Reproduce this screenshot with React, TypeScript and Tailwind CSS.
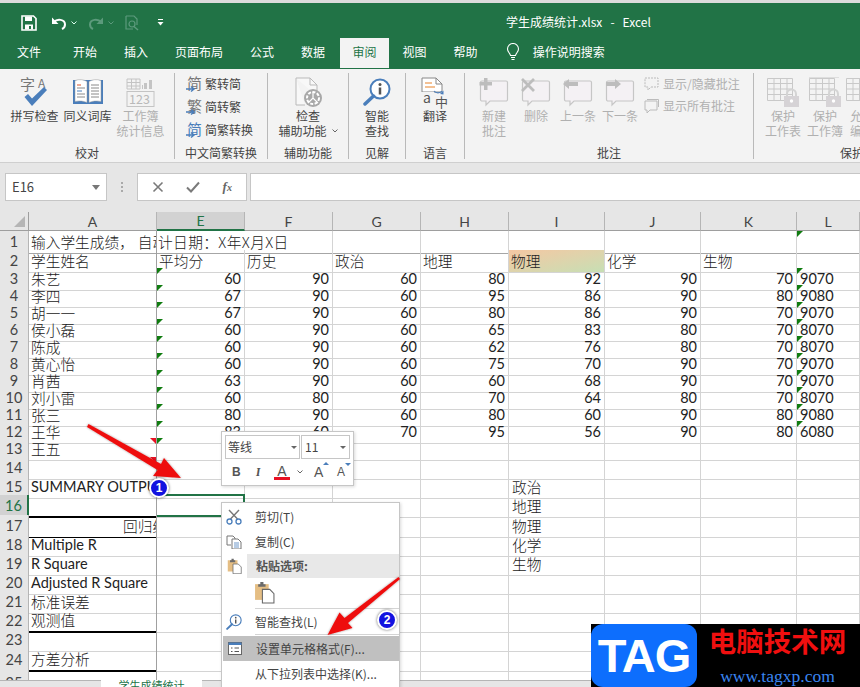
import React from "react";

const BLUE = "#4a7ebb";
const DIM = "#c4c4c4";

function Qat() {
  return (
    <div className="flex items-center h-[35px] pt-[4px]">
      <svg width="16" height="16" viewBox="0 0 16 16" className="ml-[21px]">
        <path d="M1 1h11.500L15 3.500V15H1z" fill="none" stroke="#fff" strokeWidth="1.600" />
        <rect x="4" y="1.500" width="7" height="4.500" fill="#fff" />
        <rect x="4" y="9.500" width="8" height="5" fill="#fff" />
        <rect x="8" y="11" width="2" height="3" fill="#217346" />
      </svg>
      <svg width="16" height="14" viewBox="0 0 16 14" className="ml-[14px]">
        <path d="M3 6c3-3.500 11-3 11 2.500 0 2-1 3.500-3 4.500" fill="none" stroke="#fff" strokeWidth="2" />
        <path d="M1 1.500v6.500h6.500z" fill="#fff" />
      </svg>
      <svg width="6" height="4" viewBox="0 0 6 4" className="ml-[4px]"><path d="M.5.500L3 3 5.500.500" fill="none" stroke="#dfe" strokeWidth="1" /></svg>
      <svg width="16" height="14" viewBox="0 0 16 14" className="ml-[11px]">
        <path d="M13 6C10 2.500 2 3 2 8.500c0 2 1 3.500 3 4.500" fill="none" stroke="#5c9a7c" strokeWidth="2" />
        <path d="M15 1.500v6.500H8.500z" fill="#5c9a7c" />
      </svg>
      <svg width="6" height="4" viewBox="0 0 6 4" className="ml-[4px]"><path d="M.5.500L3 3 5.500.500" fill="none" stroke="#5c9a7c" strokeWidth="1" /></svg>
      <svg width="15" height="16" viewBox="0 0 15 16" className="ml-[11px]">
        <path d="M1 1h8l3 3v6M1 1v13h7" fill="none" stroke="#5c9a7c" strokeWidth="1.200" />
        <circle cx="7" cy="9" r="3" fill="none" stroke="#5c9a7c" strokeWidth="1.200" />
        <path d="M9 11.500l4 3.500" stroke="#5c9a7c" strokeWidth="1.500" />
      </svg>
      <svg width="7" height="7" viewBox="0 0 7 7" className="ml-[17px]">
        <path d="M1 .500h5" stroke="#fff" strokeWidth="1" />
        <path d="M.500 3h6L3.500 6.500z" fill="#fff" />
      </svg>
    </div>
  );
}

function Tabs() {
  const tabs = ["开始", "插入", "页面布局", "公式", "数据"];
  return (
    <div className="flex h-[30px] text-[12px] text-white items-stretch">
      <div className="pl-[17px] pr-[18.5px] flex items-center pb-[3px]">文件</div>
      {tabs.map((t) => (
        <div key={t} className="px-[13.5px] flex items-center pb-[3px]">{t}</div>
      ))}
      <div className="ml-[1.5px] w-[49px] bg-[#f3f3f3] text-[#217346] flex items-center justify-center pb-[3px]">审阅</div>
      <div className="px-[13.5px] flex items-center pb-[3px]">视图</div>
      <div className="px-[13.5px] flex items-center pb-[3px]">帮助</div>
      <div className="ml-[15px] flex items-center pb-[3px]">
        <svg width="14" height="18" viewBox="0 0 14 18">
          <path d="M4.500 12.500C4 10 1.500 9 1.500 6a5.500 5.500 0 0 1 11 0c0 3-2.500 4-3 6.500z" fill="none" stroke="#fff" strokeWidth="1.100" />
          <path d="M5 14.500h4M5.500 16.500h3" stroke="#fff" strokeWidth="1.100" />
        </svg>
      </div>
      <div className="ml-[12.5px] flex items-center pb-[3px]">操作说明搜索</div>
    </div>
  );
}

function Big({ icon, lines, dim, w = 53, caret }: { icon: React.ReactNode; lines: string[]; dim?: boolean; w?: number; caret?: boolean }) {
  return (
    <div className={`flex flex-col items-center shrink-0 ${dim ? "text-[#b0b0b0]" : "text-[#444]"}`} style={{ width: w }}>
      <div className="h-[32px] flex items-center justify-center">{icon}</div>
      {lines.map((l, i) => (
        <div key={l} className="leading-[15px] whitespace-nowrap flex items-center">
          {l}
          {caret && i === 1 && (
            <svg width="6" height="4" viewBox="0 0 6 4" className="ml-[5px]"><path d="M.5.500L3 3 5.500.500" fill="none" stroke="#666" strokeWidth="1" /></svg>
          )}
        </div>
      ))}
    </div>
  );
}

const Spell = (
  <svg width="30" height="32" viewBox="0 0 30 32" className="overflow-visible">
    <text x="0" y="14" fontSize="15" fill="#777">字</text>
    <text x="18" y="12" fontSize="12" fill="#777">A</text>
    <path d="M8 18l4 4.500L24 11l3 3-15 16L4.500 21z" fill={BLUE} />
  </svg>
);
const Book = (
  <svg width="32" height="28" viewBox="0 0 32 28">
    <path d="M1 2h30v24H1z" fill={BLUE} />
    <path d="M3 2.500c4-1.500 9-1 12 1v21c-3-1.500-8-2-12-1zM29 2.500c-4-1.500-9-1-12 1v21c3-1.500 8-2 12-1z" fill="#fff" stroke="#999" strokeWidth=".5" />
    <path d="M5 7h4" stroke="#d9552c" strokeWidth="1" />
    <path d="M5 10h8M5 16h8M5 19h8" stroke="#8a8a8a" strokeWidth="1" />
    <path d="M5 13h5" stroke={BLUE} strokeWidth="1" />
    <path d="M19 7h8M19 10h8M19 13h8M19 16h8M19 19h8" stroke="#8a8a8a" strokeWidth="1" />
  </svg>
);
const Stats = (
  <svg width="29" height="29" viewBox="0 0 29 29" className="overflow-visible">
    <path d="M1 1h13v10H1zM1 4.500h13M1 8h13M5.500 1v10M10 1v10" fill="none" stroke={DIM} strokeWidth="1" />
    <path d="M18 5h3v6h-3zM23 2h3v9h-3zM16 7h1v4h-1z" fill={DIM} />
    <rect x="1" y="13.500" width="27" height="15" fill="none" stroke={DIM} />
    <text x="3" y="26" fontSize="12.500" fill="#b9b9b9">123</text>
  </svg>
);
const Doc = (
  <svg width="29" height="31" viewBox="0 0 29 31">
    <path d="M2 1h14l7 7v11M2 1v27h9" fill="#f8f8f8" stroke="#b9b9b9" />
    <path d="M16 1v7h7" fill="none" stroke="#b9b9b9" />
    <circle cx="19" cy="21" r="9" fill="#a8a8a8" />
    <circle cx="19" cy="21" r="6" fill="none" stroke="#fff" strokeWidth="2" strokeDasharray="3 1.500" />
    <path d="M19 15v6M14 26l5-5 5 5" stroke="#fff" strokeWidth="1.200" fill="none" />
  </svg>
);
const Lookup = ({ s = 28 }: { s?: number }) => (
  <svg width={s} height={s} viewBox="0 0 28 28">
    <circle cx="17" cy="11" r="9.500" fill="#fff" stroke={BLUE} strokeWidth="2" />
    <path d="M10.500 18L2 26" stroke={BLUE} strokeWidth="3.500" strokeLinecap="round" />
    <circle cx="17" cy="6.500" r="1.500" fill="#555" />
    <path d="M17 9.500v7" stroke="#555" strokeWidth="2.500" />
  </svg>
);
const Translate = (
  <svg width="30" height="32" viewBox="0 0 30 32" className="overflow-visible ml-[2px]">
    <path d="M1 2h14l6 6v8H1z" fill="#fff" stroke="#888" />
    <path d="M15 2v6h6" fill="none" stroke="#888" />
    <path d="M4 7h7M4 11h10" stroke="#e8832a" strokeWidth="1" />
    <rect x="1" y="16" width="12" height="13" fill="#f3f3f3" />
    <text x="2" y="27" fontSize="14" fill="#555">a</text>
    <text x="14" y="31" fontSize="13" fill="#555">中</text>
    <path d="M13 15c2 2.500 6 2.500 8 0" fill="none" stroke={BLUE} strokeWidth="1.200" />
    <path d="M19 18l3.500.5 0-4z" fill={BLUE} />
  </svg>
);

function Bubble({ kind }: { kind: "new" | "del" | "prev" | "next" }) {
  return (
    <svg width="32" height="29" viewBox="0 0 32 29">
      <path d="M5 5h24a1.500 1.500 0 0 1 1.500 1.500v17a1.500 1.500 0 0 1-1.500 1.500H13l-4 4v-4H5a1.500 1.500 0 0 1-1.500-1.500v-17A1.500 1.500 0 0 1 5 5z" transform="translate(-1 -2)" fill="#f4f1f4" stroke="#c6c6c6" strokeWidth="1.200" />
      {kind === "new" && <path d="M6 0h3.500v4H14v3.500H9.500V12H6V7.500H1.500V4H6z" fill="#bdbdbd" />}
      {kind === "del" && <path d="M2 1l12 12M14 1L2 13" stroke="#bdbdbd" strokeWidth="2.800" />}
      {kind === "prev" && <path d="M1 6l6-5v3h9v4H7v3z" fill="#bdbdbd" />}
      {kind === "next" && <path d="M17 6l-6-5v3H2v4h9v3z" fill="#bdbdbd" />}
    </svg>
  );
}

function Protect({ variant }: { variant: number }) {
  return (
    <svg width="35" height="31" viewBox="0 0 35 31" className="shrink-0">
      {variant === 2 && <path d="M1 0h30" stroke="#c9c9c9" />}
      <path d="M1.500 1.500h25v22h-25zM1.500 6.500h25M1.500 12h25M1.500 17.500h25M8 1.500v22M14.500 1.500v22M21 1.500v22" fill="none" stroke="#c9c9c9" />
      <path d="M21 20v-3a4.500 4.500 0 0 1 9 0v3" fill="none" stroke="#d4d4d4" strokeWidth="2" />
      <rect x="18" y="19" width="15" height="11" fill="#d6d3d6" />
      <circle cx="25.500" cy="24" r="1.700" fill="#fff" />
    </svg>
  );
}

function Small({ glyph, label, color }: { glyph: string; label: string; color: string }) {
  return (
    <div className="flex items-center h-[23px] text-[#444]">
      <svg width="17" height="20" viewBox="0 0 17 20" className="mr-[2px] overflow-visible">
        <text x="1" y="15" fontSize="15" fill={color}>{glyph}</text>
        <path d="M0 15h7M5 12.500l3 2.500-3 2.500" fill="none" stroke={BLUE} strokeWidth="1.500" />
      </svg>
      <span>{label}</span>
    </div>
  );
}

function Group({ w, label, children, last }: { w: number; label: string; children: React.ReactNode; last?: boolean }) {
  return (
    <div className={`flex flex-col shrink-0 my-[4px] h-[86px] ${last ? "" : "border-r border-[#b9b9b9]"}`} style={{ width: w }}>
      <div className="h-[73px] flex pt-[3px]">{children}</div>
      <div className={`h-[13px] text-[#444] leading-[14px] whitespace-nowrap ${last ? "pl-[86px] text-left" : "text-center"}`}>{label}</div>
    </div>
  );
}

function Ribbon() {
  return (
    <div className="flex h-[94px] bg-[#f3f3f3] text-[12px] border-b border-[#cfcfcf]">
      <Group w={175} label="校对">
        <div className="flex pl-[8px]">
          <Big icon={Spell} lines={["拼写检查"]} />
          <Big icon={Book} lines={["同义词库"]} />
          <Big icon={Stats} lines={["工作簿", "统计信息"]} dim />
        </div>
      </Group>
      <Group w={93} label="中文简繁转换">
        <div className="flex flex-col pl-[11px] -mt-[4px]">
          <Small glyph="简" label="繁转简" color="#777" />
          <Small glyph="繁" label="简转繁" color="#777" />
          <Small glyph="简" label="简繁转换" color={BLUE} />
        </div>
      </Group>
      <Group w={81} label="辅助功能">
        <Big icon={Doc} lines={["检查", "辅助功能"]} w={80} caret />
      </Group>
      <Group w={57} label="见解">
        <Big icon={<Lookup />} lines={["智能", "查找"]} w={56} />
      </Group>
      <Group w={59} label="语言">
        <Big icon={Translate} lines={["翻译"]} w={58} />
      </Group>
      <Group w={289} label="批注">
        <div className="flex pl-[8px]">
          <Big icon={<Bubble kind="new" />} lines={["新建", "批注"]} w={42} dim />
          <Big icon={<Bubble kind="del" />} lines={["删除"]} w={42} dim />
          <Big icon={<Bubble kind="prev" />} lines={["上一条"]} w={42} dim />
          <Big icon={<Bubble kind="next" />} lines={["下一条"]} w={42} dim />
          <div className="flex flex-col pl-[3px] -mt-[3px] text-[#b0b0b0]">
            <div className="flex items-center h-[22px] gap-[4px]">
              <svg width="15" height="14" viewBox="0 0 15 14"><path d="M1 1h13v9H7l-3 3v-3H1z" fill="none" stroke="#bbb" strokeDasharray="2 1" /></svg>
              <span>显示/隐藏批注</span>
            </div>
            <div className="flex items-center h-[22px] gap-[4px]">
              <svg width="15" height="14" viewBox="0 0 15 14"><path d="M1 2h12v9H6l-3 3v-3H1z" fill="none" stroke="#bbb" /><path d="M3 .5h11.500V8" fill="none" stroke="#bbb" /></svg>
              <span>显示所有批注</span>
            </div>
          </div>
        </div>
      </Group>
      <Group w={106} label="保护" last>
        <div className="flex pl-[8px]">
          <Big icon={<Protect variant={1} />} lines={["保护", "工作表"]} w={42} dim />
          <Big icon={<Protect variant={2} />} lines={["保护", "工作簿"]} w={42} dim />
          <Big icon={<Protect variant={1} />} lines={["允许", "编辑"]} w={32} dim />
        </div>
      </Group>
    </div>
  );
}

function FormulaBar() {
  return (
    <div className="h-[49px] bg-[#e6e6e6] flex items-start pt-[10px] pl-[5px] text-[13px] text-[#444]">
      <div className="w-[102px] h-[28px] bg-white border border-[#c6c6c6] flex items-center justify-between pl-[6px] pr-[6px]">
        <span>E16</span>
        <svg width="8" height="5" viewBox="0 0 8 5"><path d="M0 0h8L4 5z" fill="#777" /></svg>
      </div>
      <div className="w-[30px] h-[28px] flex flex-col items-center justify-center gap-[2px]">
        <i className="w-[2px] h-[2px] bg-[#aaa]" /><i className="w-[2px] h-[2px] bg-[#aaa]" /><i className="w-[2px] h-[2px] bg-[#aaa]" />
      </div>
      <div className="w-[110px] h-[28px] bg-white border border-[#c6c6c6] flex items-center justify-around px-[3px]">
        <svg width="12" height="12" viewBox="0 0 12 12"><path d="M1.500 1.500l9 9M10.500 1.500l-9 9" stroke="#7a7a7a" strokeWidth="1.600" /></svg>
        <svg width="14" height="12" viewBox="0 0 14 12"><path d="M1 6.500l4 4 8-9" fill="none" stroke="#7a7a7a" strokeWidth="2" /></svg>
        <span className="font-['Liberation_Serif',serif] italic font-bold text-[13px] text-[#666]">f<span className="text-[10px]">x</span></span>
      </div>
      <div className="ml-[3px] flex-1 h-[28px] bg-white border-y border-[#c6c6c6] border-l" />
    </div>
  );
}

const GRID = "grid grid-cols-[29px_128px_88px_88px_88px_88px_96px_96px_96px_63px]";

function Tri({ right }: { right?: boolean }) {
  if (right) return <i className="absolute right-0 top-0 w-0 h-0 border-t-[6px] border-l-[6px] border-t-[#e81123] border-l-transparent" />;
  return <i className="absolute left-0 top-0 w-0 h-0 border-t-[6px] border-r-[6px] border-r-transparent border-t-[#107c10]" />;
}

function Cell({ children, num, tri, redRight, className = "" }: { children?: React.ReactNode; num?: boolean; tri?: boolean; redRight?: boolean; className?: string }) {
  return (
    <div className={`relative border-r border-b border-[#d4d4d4] whitespace-nowrap flex items-center min-w-0 ${num ? "justify-end pr-[3px] text-[14.5px] font-['Lato',sans-serif]" : "pl-[2px] text-[14.7px] font-light"} ${className}`}>
      {tri && <Tri />}
      {redRight && <Tri right />}
      {children}
    </div>
  );
}

function RowHead({ n, active }: { n: number; active?: boolean }) {
  return (
    <div className={`border-r border-b border-[#b5b5b5] flex items-center justify-center text-[14.5px] font-['Lato',sans-serif] ${active ? "bg-[#d2d2d2] text-[#217346] border-r-[#217346] border-r-2" : "bg-[#e6e6e6] text-[#444]"}`}>{n}</div>
  );
}

const data: [string, number, number, number, number, number, number, number, string][] = [
  ["朱艺", 60, 90, 60, 80, 92, 90, 70, "9070"],
  ["李四", 67, 90, 60, 95, 86, 90, 80, "9080"],
  ["胡一一", 67, 90, 60, 80, 86, 90, 70, "9070"],
  ["侯小磊", 60, 90, 60, 65, 83, 80, 70, "8070"],
  ["陈成", 60, 90, 60, 62, 76, 80, 70, "8070"],
  ["黄心怡", 60, 90, 60, 75, 70, 90, 70, "9070"],
  ["肖茜", 63, 90, 60, 60, 68, 90, 70, "9070"],
  ["刘小雷", 60, 80, 60, 70, 64, 80, 70, "8070"],
  ["张三", 80, 90, 60, 80, 60, 90, 80, "9080"],
  ["王华", 83, 60, 70, 95, 56, 90, 80, "6080"],
];

function Lower({ n, h, a, i, aClass = "", latin, active, redRight, tri }: { n: number; h: string; a?: React.ReactNode; i?: string; aClass?: string; latin?: boolean; active?: boolean; redRight?: boolean; tri?: boolean }) {
  return (
    <div className={`${GRID} ${h}`}>
      <RowHead n={n} active={active} />
      <Cell className={`overflow-hidden border-r-[#a0a0a0] ${latin ? "!text-[14.5px] !font-normal font-['Lato',sans-serif]" : ""} ${aClass}`} redRight={redRight}>{a}</Cell>
      <Cell tri={tri} /><Cell /><Cell /><Cell />
      <Cell className="!pl-[3px]">{i}</Cell>
      <Cell /><Cell /><Cell />
    </div>
  );
}

function Sheet() {
  const cols = ["A", "E", "F", "G", "H", "I", "J", "K", "L"];
  return (
    <div className="text-[#222] font-['Noto_Sans_CJK_SC',sans-serif]">
      <div className={`${GRID} h-[19px] bg-[#e6e6e6] text-[14px] text-[#444] font-['Lato',sans-serif]`}>
        <div className="relative border-r border-b border-[#9e9e9e]">
          <i className="absolute right-[3px] bottom-[3px] w-0 h-0 border-b-[11px] border-l-[11px] border-b-[#b5b5b5] border-l-transparent" />
        </div>
        {cols.map((c) => (
          <div key={c} className={`border-r border-[#b5b5b5] flex items-end justify-center leading-[16px] ${c === "E" ? "bg-[#d2d2d2] border-b-2 border-b-[#217346] text-[#217346]" : "border-b border-b-[#9e9e9e]"}`}>{c}</div>
        ))}
      </div>
      <div className={`${GRID} h-[19px]`}>
        <RowHead n={1} />
        <Cell className="overflow-hidden border-b-[#a6a6a6] border-r-[#a0a0a0]">输入学生成绩，<span className="ml-[4px]">自动</span></Cell>
        <Cell className="border-b-[#a6a6a6] !pl-[1px] border-r-transparent tracking-[0.4px]">计日期：X年X月X日</Cell>
        {["f", "g", "h", "i", "j", "k"].map((k) => <Cell key={k} className="border-b-[#a6a6a6]" />)}
        <Cell tri className="border-b-[#a6a6a6]" />
      </div>
      <div className={`${GRID} h-[18px]`}>
        <RowHead n={2} />
        <Cell className="border-r-[#a0a0a0]">学生姓名</Cell>
        <Cell>平均分</Cell><Cell>历史</Cell><Cell>政治</Cell><Cell>地理</Cell>
        <Cell className="bg-gradient-to-br from-[#f4c7a3] to-[#c6dfb4]">物理</Cell>
        <Cell>化学</Cell><Cell>生物</Cell><Cell />
      </div>
      {data.map((r, idx) => (
        <div key={r[0]} className={`${GRID} h-[17px]`}>
          <RowHead n={idx + 3} />
          <Cell className="border-r-[#a0a0a0]">{r[0]}</Cell>
          <Cell num tri>{r[1]}</Cell>
          <Cell num>{r[2]}</Cell><Cell num>{r[3]}</Cell><Cell num>{r[4]}</Cell>
          <Cell num>{r[5]}</Cell><Cell num>{r[6]}</Cell><Cell num>{r[7]}</Cell>
          <Cell tri className="!pl-[3px] !text-[14.5px] !font-normal font-['Lato',sans-serif]">{r[8]}</Cell>
        </div>
      ))}
      <Lower n={13} h="h-[19px]" a="王五" redRight tri />
      <Lower n={14} h="h-[19px]" redRight />
      <Lower n={15} h="h-[19px]" a="SUMMARY OUTPUT" latin i="政治" />
      <Lower n={16} h="h-[20px]" i="地理" active aClass="border-b-2 border-b-black" />
      <Lower n={17} h="h-[19px]" a={<span className="pl-[92px]">回归统计</span>} i="物理" aClass="border-b-black" />
      <Lower n={18} h="h-[19px]" a="Multiple R" latin i="化学" />
      <Lower n={19} h="h-[19px]" a="R Square" latin i="生物" />
      <Lower n={20} h="h-[19px]" a="Adjusted R Square" latin />
      <Lower n={21} h="h-[19px]" a="标准误差" />
      <Lower n={22} h="h-[19px]" a="观测值" aClass="border-b-2 border-b-black" />
      <Lower n={23} h="h-[20px]" />
      <Lower n={24} h="h-[19px]" a="方差分析" aClass="border-b-2 border-b-black" />
      <div className={`${GRID} h-[12px] overflow-hidden`}>
        <RowHead n={25} />
        <Cell className="border-r-[#a0a0a0]" />
        <Cell className="justify-center !text-[13px] !font-normal font-['Lato',sans-serif]"><span className="pl-[1px] pt-[10px]">F</span></Cell>
        <Cell /><Cell /><Cell /><Cell /><Cell /><Cell /><Cell />
      </div>
      <div className="h-[7px] bg-[#e6e6e6] border-t border-[#b5b5b5] flex">
        <div className="ml-[101px] w-[101px] bg-white text-[11px] text-[#217346] overflow-hidden text-center leading-[10px] -mt-px">学生成绩统计</div>
      </div>
    </div>
  );
}

function MiniToolbar() {
  return (
    <div className="absolute left-[221px] top-[431px] w-[133px] h-[55px] bg-white border border-[#c6c6c6] shadow-[1px_1px_3px_rgba(0,0,0,0.15)] text-[12px] text-[#444] p-[3px]">
      <div className="flex h-[24px]">
        <div className="w-[75px] border border-[#c6c6c6] flex items-center justify-between px-[2px] mr-[1px]">
          <span>等线</span>
          <svg width="6" height="3" viewBox="0 0 6 3"><path d="M0 0h6L3 3z" fill="#666" /></svg>
        </div>
        <div className="flex-1 border border-[#c6c6c6] flex items-center justify-between px-[3px]">
          <span>11</span>
          <svg width="6" height="3" viewBox="0 0 6 3"><path d="M0 0h6L3 3z" fill="#666" /></svg>
        </div>
      </div>
      <div className="flex items-center h-[26px] pl-[7px] text-[#555] font-['Liberation_Sans',sans-serif]">
        <span className="font-bold w-[22px]">B</span>
        <span className="italic font-serif font-bold w-[20px] pl-[2px]">I</span>
        <span className="w-[16px] flex flex-col items-center leading-[12px] text-[14px]">A<i className="w-[16px] h-[3px] bg-[#e81123]" /></span>
        <svg width="6" height="4" viewBox="0 0 6 4" className="ml-[7px] mr-[11px]"><path d="M.5.500L3 3 5.500.500" fill="none" stroke="#666" /></svg>
        <span className="relative w-[22px] text-[14px]">A<i className="absolute left-[9px] top-0 w-0 h-0 border-b-[3px] border-x-[3px] border-b-[#4a7ebb] border-x-transparent" /></span>
        <span className="relative text-[12px] ml-[1px]">A<i className="absolute left-[8px] top-0 w-0 h-0 border-t-[3px] border-x-[3px] border-t-[#4a7ebb] border-x-transparent" /></span>
      </div>
    </div>
  );
}

function MenuItem({ icon, children, h = "h-[25px]", cls = "" }: { icon?: React.ReactNode; children?: React.ReactNode; h?: string; cls?: string }) {
  return (
    <div className={`flex items-center ${h} ${cls}`}>
      <div className="w-[25px] flex justify-center shrink-0 pr-px">{icon}</div>
      <div className="pl-[8px] whitespace-nowrap">{children}</div>
    </div>
  );
}

const Clip = ({ s }: { s: number }) => (
  <svg width={s} height={s * 1.1} viewBox="0 0 20 22">
    <path d="M1 3h13v15H1z" fill="#e5be84" />
    <path d="M4 3h7v2.500H4zM6 1h3v2H6z" fill="#6b6b6b" />
    <path d="M8 8h7l4 4v9H8z" fill="#fff" stroke="#666" />
  </svg>
);

function ContextMenu() {
  return (
    <div className="absolute left-[221px] top-[502px] w-[179px] h-[186px] bg-white border border-[#c6c6c6] shadow-[1px_1px_3px_rgba(0,0,0,0.15)] text-[12px] text-[#444] pt-[1px] overflow-hidden">
      <MenuItem icon={
        <svg width="16" height="16" viewBox="0 0 16 16">
          <path d="M3 1l8.500 9M13 1L4.500 10" stroke="#777" strokeWidth="1.400" />
          <circle cx="3.500" cy="12.500" r="2.500" fill="none" stroke={BLUE} strokeWidth="1.300" />
          <circle cx="12.500" cy="12.500" r="2.500" fill="none" stroke={BLUE} strokeWidth="1.300" />
        </svg>
      }>剪切(T)</MenuItem>
      <MenuItem icon={
        <svg width="16" height="14" viewBox="0 0 16 14">
          <path d="M1 1h6l2 2v2M1 1v9h4" fill="none" stroke="#777" />
          <path d="M6 4h6l3 3v7H6z" fill="#fff" stroke="#777" />
          <path d="M8 8h5M8 10h5M8 12h5" stroke={BLUE} strokeWidth=".8" />
        </svg>
      }>复制(C)</MenuItem>
      <div className="flex h-[24px] items-center">
        <div className="w-[25px] flex justify-center pr-px"><Clip s={15} /></div>
        <div className="flex-1 h-full bg-[#e8e8e8] pl-[9px] flex items-center font-bold text-[#555]">粘贴选项:</div>
      </div>
      <div className="h-[30px] pl-[32px] flex items-center"><Clip s={21} /></div>
      <div className="ml-[33px] border-t border-[#d4d4d4]" />
      <MenuItem h="h-[25px]" icon={<Lookup s={16} />}>智能查找(L)</MenuItem>
      <div className="ml-[33px] border-t border-[#d4d4d4]" />
      <MenuItem h="h-[25px]" cls="bg-[#c0c0c0] ml-px mt-px" icon={
        <svg width="14" height="13" viewBox="0 0 14 13">
          <rect x=".5" y=".5" width="13" height="12" fill="#fff" stroke="#666" />
          <rect x=".5" y=".5" width="13" height="2.500" fill="#4a7ebb" />
          <path d="M3 6h1.500M6.500 6H11M3 9.500h1.500M6.500 9.500H11" stroke="#555" />
        </svg>
      }>设置单元格格式(F)...</MenuItem>
      <MenuItem h="h-[25px]">从下拉列表中选择(K)...</MenuItem>
    </div>
  );
}

function Annot() {
  return (
    <svg width="860" height="687" viewBox="0 0 860 687" className="absolute left-0 top-0 pointer-events-none">
      <defs>
        <filter id="s" x="-20%" y="-20%" width="140%" height="140%">
          <feDropShadow dx="0" dy="0" stdDeviation="1.200" floodColor="#000" floodOpacity=".4" />
        </filter>
      </defs>
      <path d="M87 427l1.500-3L161 464l3-6 17 20-28-2 4.500-6z" fill="#ee1010" filter="url(#s)" />
      <path d="M400 579l-1.500-2-54 41-5-5.500-12 22.500 25-7-4.500-5z" fill="#ee1010" filter="url(#s)" />
    </svg>
  );
}

function Badge({ cls, n }: { cls: string; n: string }) {
  return (
    <div className={`absolute ${cls} w-[20px] h-[20px] rounded-full bg-[#1212e0] border-2 border-white shadow-[0_0_3px_rgba(0,0,0,0.6)] text-white font-bold text-[12px] flex items-center justify-center font-['Liberation_Sans',sans-serif]`}>{n}</div>
  );
}

function Watermark() {
  return (
    <div className="absolute left-[591px] top-[624px] w-[269px] h-[63px] bg-black flex overflow-hidden">
      <div className="w-[106px] h-[63px] bg-[#0d6efd] rounded-[12px] text-white font-bold text-[47px] leading-[63px] text-center font-['Liberation_Sans',sans-serif] tracking-[-1px]">TAG</div>
      <div className="flex flex-col items-center pl-[4px] w-[157px]">
        <div className="text-[#f00f0f] font-bold text-[27.500px] leading-[32px] whitespace-nowrap font-['Noto_Sans_CJK_SC',sans-serif]">电脑技术网</div>
        <div className="text-[#3a86f0] text-[17.500px] leading-[18px] mt-[11px] whitespace-nowrap font-['Liberation_Serif',serif]">www.tagxp.com</div>
      </div>
    </div>
  );
}

export default function App() {
  return (
    <div className="relative w-[860px] h-[687px] overflow-hidden bg-white font-['Noto_Sans_CJK_SC',sans-serif]">
      <div className="h-[69px] bg-[#217346] border-t-[3px] border-[#dcdcdc] relative">
        <Qat />
        <Tabs />
        <div className="absolute left-[506px] top-[10px] text-[12px] text-white whitespace-pre">{"学生成绩统计.xlsx   -   Excel"}</div>
      </div>
      <Ribbon />
      <FormulaBar />
      <Sheet />
      <div className="absolute left-[157px] top-[494px] w-[88px] h-[23px] border-y-2 border-r-2 border-[#217346]" />
      <MiniToolbar />
      <ContextMenu />
      <Annot />
      <Badge cls="left-[149px] top-[478px]" n="1" />
      <Badge cls="left-[377px] top-[610px]" n="2" />
      <Watermark />
    </div>
  );
}
